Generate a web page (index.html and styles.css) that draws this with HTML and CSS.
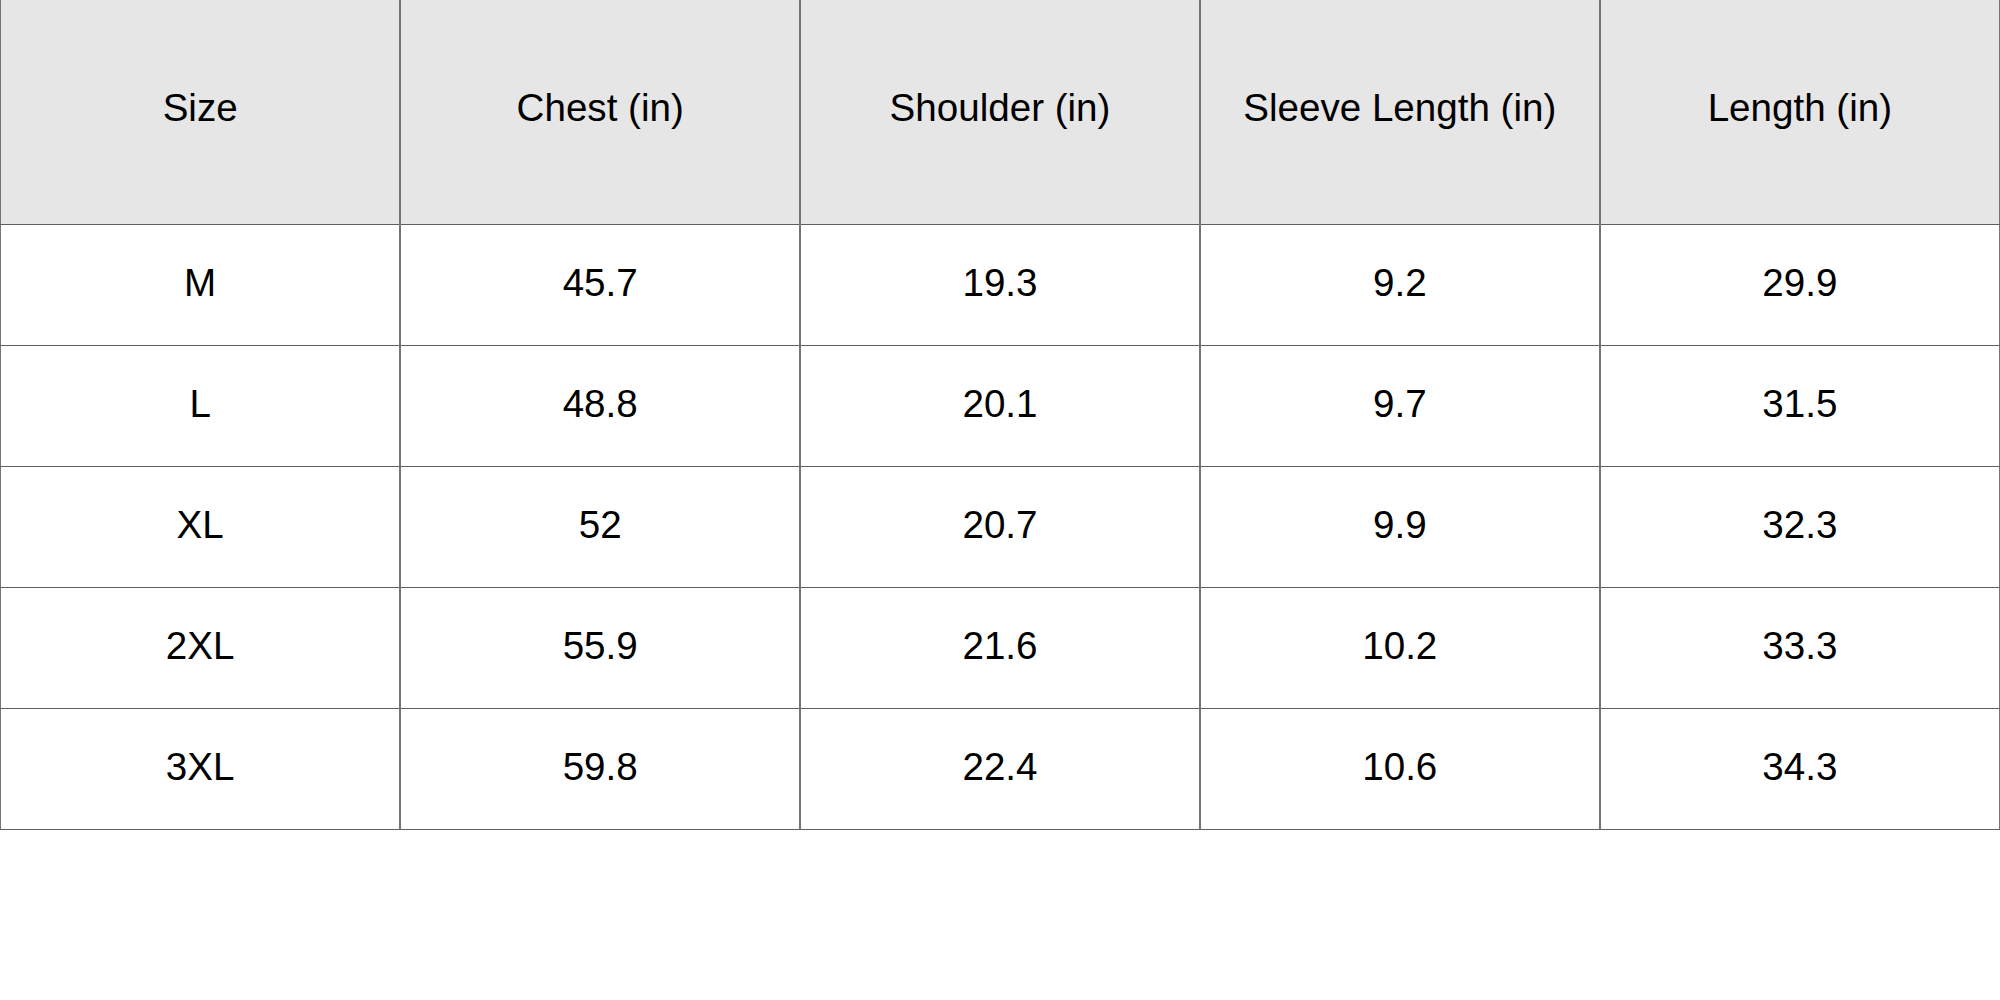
FILE: index.html
```html
<!DOCTYPE html>
<html>
<head>
<meta charset="utf-8">
<link rel="stylesheet" href="styles.css">
</head>
<body>
<table class="size-table">
  <thead>
    <tr class="head-row">
      <th>Size</th>
      <th>Chest (in)</th>
      <th>Shoulder (in)</th>
      <th>Sleeve Length (in)</th>
      <th>Length (in)</th>
    </tr>
  </thead>
  <tbody>
    <tr><td>M</td><td>45.7</td><td>19.3</td><td>9.2</td><td>29.9</td></tr>
    <tr><td>L</td><td>48.8</td><td>20.1</td><td>9.7</td><td>31.5</td></tr>
    <tr><td>XL</td><td>52</td><td>20.7</td><td>9.9</td><td>32.3</td></tr>
    <tr><td>2XL</td><td>55.9</td><td>21.6</td><td>10.2</td><td>33.3</td></tr>
    <tr><td>3XL</td><td>59.8</td><td>22.4</td><td>10.6</td><td>34.3</td></tr>
  </tbody>
</table>
</body>
</html>
```

FILE: styles.css
```css
html, body {
  margin: 0;
  padding: 0;
  background: #ffffff;
}

.size-table {
  width: 2000px;
  border-collapse: collapse;
  table-layout: fixed;
  font-family: "Liberation Sans", Arial, sans-serif;
  font-size: 38.6px;
  color: #000000;
}

.size-table th,
.size-table td {
  border-left: 2px solid #737373;
  border-right: 2px solid #737373;
  border-bottom: 1px solid #5e5e5e;
  border-top: none;
  padding: 0;
  text-align: center;
  vertical-align: middle;
  font-weight: normal;
}

.size-table th:first-child,
.size-table td:first-child {
  border-left: 1px solid #737373;
}

.size-table th:last-child,
.size-table td:last-child {
  border-right: 1px solid #737373;
}

.size-table tbody tr:first-child td {
  border-top: 1px solid #5e5e5e;
}

.size-table th {
  background: #e6e6e6;
  height: 216px;
  padding-bottom: 8px;
}

.size-table td {
  height: 115px;
  padding-bottom: 5px;
}
```
